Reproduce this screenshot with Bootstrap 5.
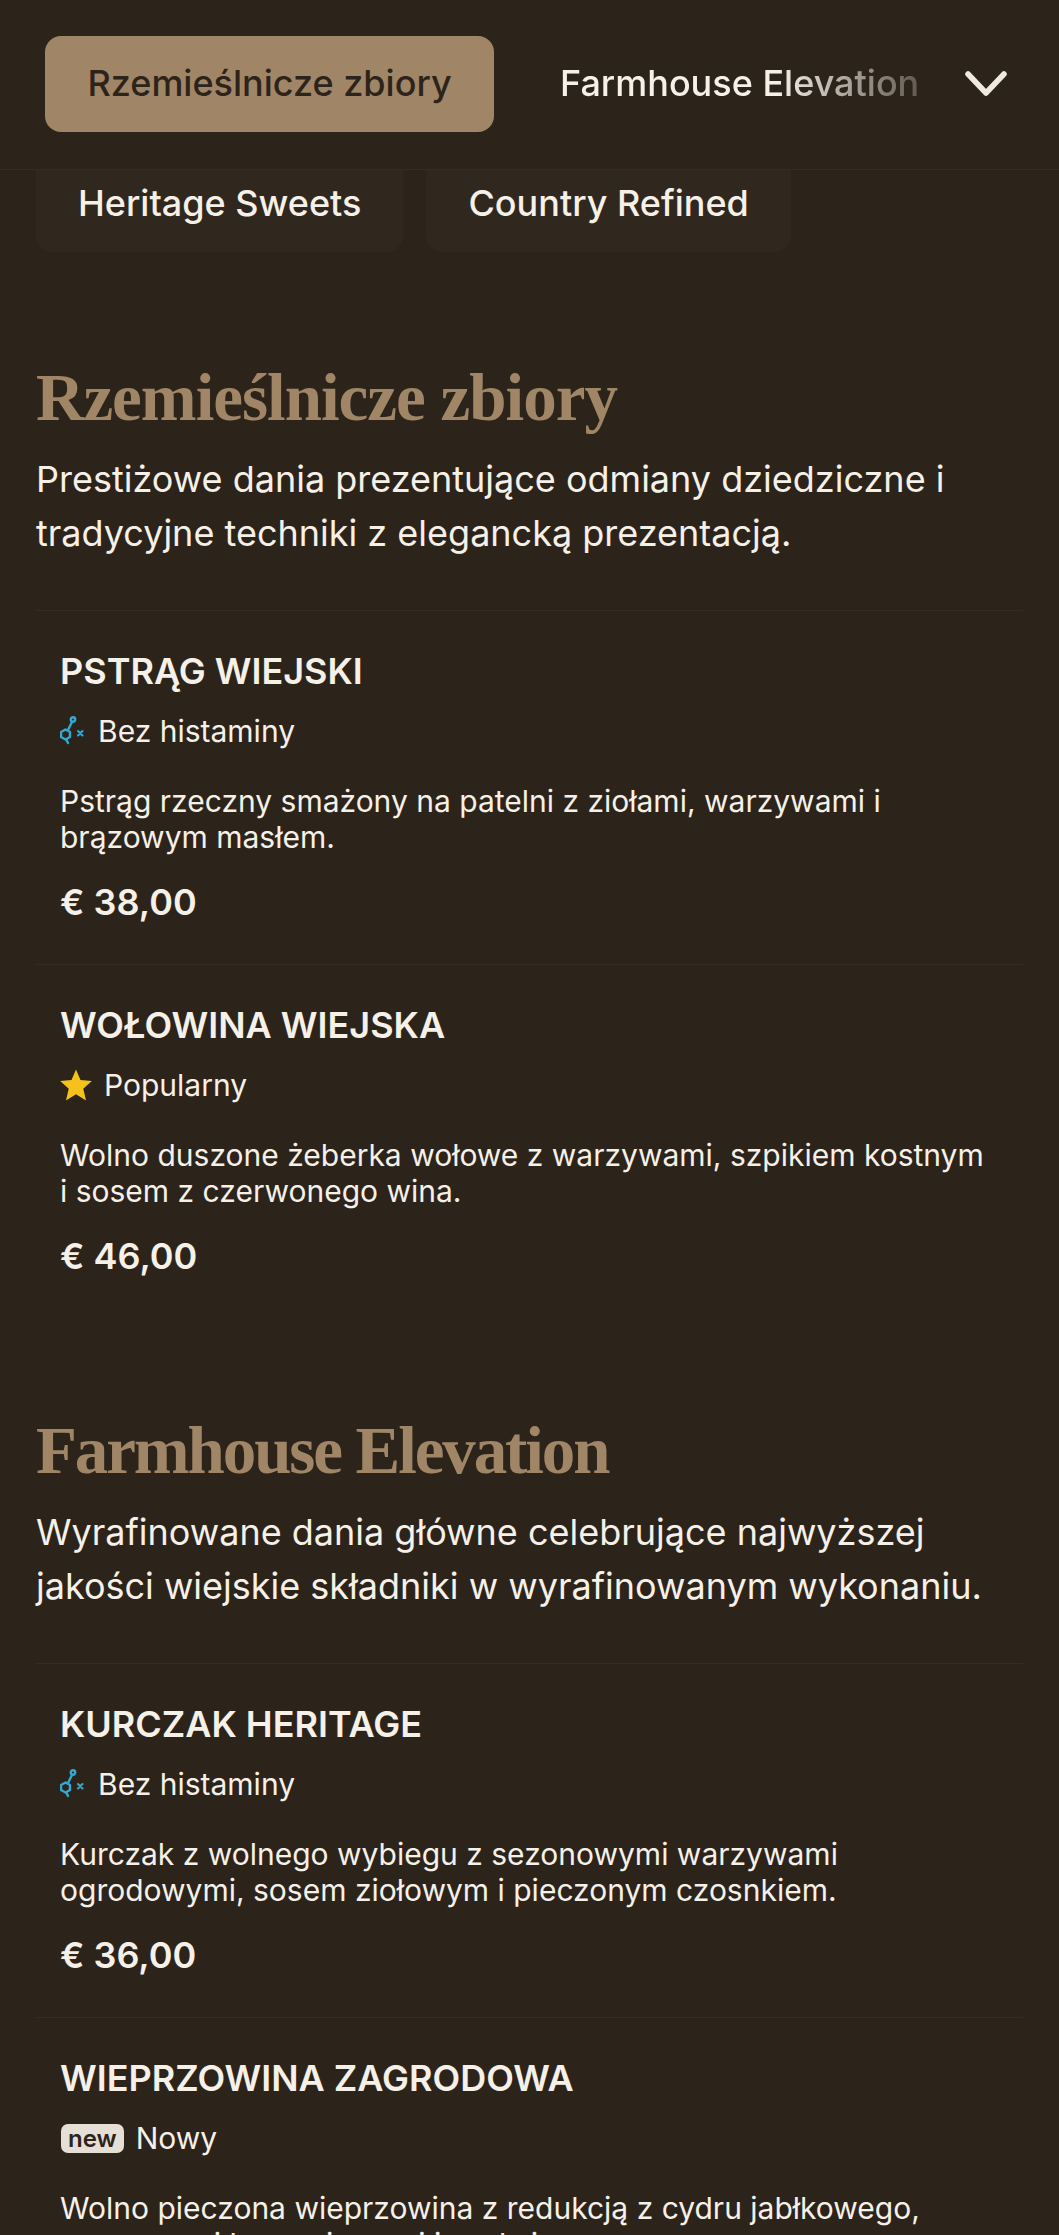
<!DOCTYPE html>
<html lang="pl">
<head>
<meta charset="utf-8">
<title>Menu</title>
<link href="https://cdn.jsdelivr.net/npm/bootstrap@5.3.0/dist/css/bootstrap.min.css" rel="stylesheet">
<style>
html,body{height:2235px;overflow:hidden;background:#2c241b}
body{font-family:Inter,"Liberation Sans",sans-serif;color:#f5f0e8}
.topbar{height:170px;border-bottom:1px solid #352c23;padding:36px 51px 0 45px}
.tab-on{width:449px;height:96px;background:#a08666;color:#2c241b;border-radius:16px;font-size:36px;font-weight:500;padding-bottom:2px}
.tab-off{width:362px;margin-left:66px;font-size:36px;font-weight:500;height:96px;padding-bottom:2px;white-space:nowrap;overflow:hidden;-webkit-mask-image:linear-gradient(90deg,#000 60%,rgba(0,0,0,.25) 100%);mask-image:linear-gradient(90deg,#000 60%,rgba(0,0,0,.25) 100%)}
.chev{margin-top:34px}
.strip{height:82px;padding:0 36px;gap:23px}
.strip-pill{background:#30271e;border-radius:0 0 16px 16px;padding:0 42px 16px;font-size:36px;font-weight:500;height:82px}
.sec-first{margin-top:108px}
.sec-next{margin-top:95px}
.sec-head{padding:0 36px 50px}
.sec-title{font-family:"Liberation Serif",serif;font-weight:700;font-size:67px;line-height:74px;color:#a08666;margin:0 0 18px;letter-spacing:-1px}
.sec-title-tight{letter-spacing:-2.1px}
.sec-desc{font-size:36px;line-height:54px;margin:0;color:#f5f0e8}
.dish-list{margin:0 36px}
.dish{border-top:1px solid #352c23;padding:0 24px;height:354px}
.dish-name{font-size:36px;font-weight:600;line-height:40px;margin:0;padding-top:40px;text-transform:uppercase}
.dish-tag{font-size:30px;line-height:36px;margin-top:22px;gap:12px}
.dish-text{font-size:30px;line-height:36px;margin:34px 0 0;color:#f5f0e8}
.dish-price{font-size:36px;font-weight:600;line-height:40px;margin-top:27px}
.new-chip{background:#e6dfd5;color:#2c241b;font-size:24px;font-weight:600;line-height:29px;padding:0 7px;border-radius:7px;margin-left:1px}
</style>
</head>
<body>
<header class="topbar d-flex align-items-start">
  <div class="tab-on d-flex align-items-center justify-content-center">Rzemieślnicze zbiory</div>
  <div class="tab-off d-flex align-items-center">Farmhouse Elevation</div>
  <svg class="ms-auto chev" width="44" height="28" viewBox="0 0 44 28" aria-hidden="true"><path d="M4 4 L22 23 L40 4" fill="none" stroke="#efe9e0" stroke-width="5.5" stroke-linecap="round" stroke-linejoin="round"/></svg>
</header>
<div class="strip d-flex">
  <div class="strip-pill d-flex align-items-center">Heritage Sweets</div>
  <div class="strip-pill d-flex align-items-center">Country Refined</div>
</div>

<section class="sec-first">
  <div class="sec-head">
    <h2 class="sec-title">Rzemieślnicze zbiory</h2>
    <p class="sec-desc">Prestiżowe dania prezentujące odmiany dziedziczne i tradycyjne techniki z elegancką prezentacją.</p>
  </div>
  <div class="dish-list">
    <article class="dish">
      <h3 class="dish-name">Pstrąg wiejski</h3>
      <div class="dish-tag d-flex align-items-center">
        <svg width="26" height="30" viewBox="0 0 26 30" fill="none" stroke="#33a9d3" stroke-width="2.4" stroke-linecap="round" aria-hidden="true"><path d="M5.5 13.5 L10 16 L10 21 L5.5 23.5 L1 21 L1 16 Z" stroke-linejoin="round"/><path d="M8 14 L12 6 M6.5 24 L8 27"/><circle cx="13" cy="3.5" r="2.2"/><path d="M18 15 l4.5 4.5 M22.5 15 l-4.5 4.5" stroke-width="2"/></svg>
        <span>Bez histaminy</span>
      </div>
      <p class="dish-text">Pstrąg rzeczny smażony na patelni z ziołami, warzywami i brązowym masłem.</p>
      <div class="dish-price">€ 38,00</div>
    </article>
    <article class="dish">
      <h3 class="dish-name">Wołowina wiejska</h3>
      <div class="dish-tag d-flex align-items-center">
        <svg width="32" height="32" viewBox="1 1 30 30" aria-hidden="true"><path d="M16 1.5 L20.2 11.2 L30.8 12.2 L22.8 19.4 L25.4 30.5 L16 24.6 L6.6 30.5 L9.2 19.4 L1.2 12.2 L11.8 11.2 Z" fill="#f5c21b"/></svg>
        <span>Popularny</span>
      </div>
      <p class="dish-text">Wolno duszone żeberka wołowe z warzywami, szpikiem kostnym i sosem z czerwonego wina.</p>
      <div class="dish-price">€ 46,00</div>
    </article>
  </div>
</section>

<section class="sec-next">
  <div class="sec-head">
    <h2 class="sec-title sec-title-tight">Farmhouse Elevation</h2>
    <p class="sec-desc">Wyrafinowane dania główne celebrujące najwyższej jakości wiejskie składniki w wyrafinowanym wykonaniu.</p>
  </div>
  <div class="dish-list">
    <article class="dish">
      <h3 class="dish-name">Kurczak Heritage</h3>
      <div class="dish-tag d-flex align-items-center">
        <svg width="26" height="30" viewBox="0 0 26 30" fill="none" stroke="#33a9d3" stroke-width="2.4" stroke-linecap="round" aria-hidden="true"><path d="M5.5 13.5 L10 16 L10 21 L5.5 23.5 L1 21 L1 16 Z" stroke-linejoin="round"/><path d="M8 14 L12 6 M6.5 24 L8 27"/><circle cx="13" cy="3.5" r="2.2"/><path d="M18 15 l4.5 4.5 M22.5 15 l-4.5 4.5" stroke-width="2"/></svg>
        <span>Bez histaminy</span>
      </div>
      <p class="dish-text">Kurczak z wolnego wybiegu z sezonowymi warzywami ogrodowymi, sosem ziołowym i pieczonym czosnkiem.</p>
      <div class="dish-price">€ 36,00</div>
    </article>
    <article class="dish">
      <h3 class="dish-name">Wieprzowina zagrodowa</h3>
      <div class="dish-tag d-flex align-items-center">
        <span class="new-chip">new</span>
        <span>Nowy</span>
      </div>
      <p class="dish-text">Wolno pieczona wieprzowina z redukcją z cydru jabłkowego, warzywami korzeniowymi i szałwią.</p>
    </article>
  </div>
</section>
<script src="https://cdn.jsdelivr.net/npm/bootstrap@5.3.0/dist/js/bootstrap.bundle.min.js"></script>
</body>
</html>
